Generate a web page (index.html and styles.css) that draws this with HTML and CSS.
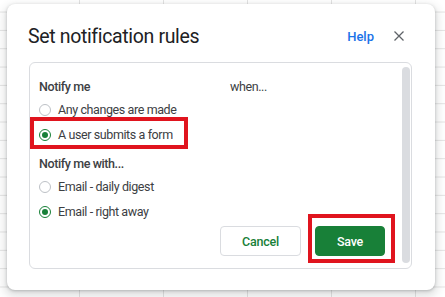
FILE: index.html
```html
<!DOCTYPE html>
<html>
<head>
<meta charset="utf-8">
<link rel="stylesheet" href="styles.css">
</head>
<body>
<div class="dialog">
  <div class="header">
    <div class="title">Set notification rules</div>
    <div class="help">Help</div>
    <svg class="close" width="10" height="10" viewBox="0 0 10 10"><path d="M0.5 0.5L9.5 9.5M9.5 0.5L0.5 9.5" stroke="#5f6368" stroke-width="1.3" fill="none"/></svg>
  </div>
  <div class="panel">
    <div class="heading-row">
      <span class="heading">Notify me</span>
      <span class="when">when...</span>
    </div>
    <label class="radio-row"><span class="radio"></span>Any changes are made</label>
    <label class="radio-row"><span class="radio checked"></span>A user submits a form</label>
    <div class="heading-row second"><span class="heading">Notify me with...</span></div>
    <label class="radio-row"><span class="radio"></span>Email - daily digest</label>
    <label class="radio-row"><span class="radio checked"></span>Email - right away</label>
    <div class="actions">
      <button class="btn cancel">Cancel</button>
      <button class="btn save">Save</button>
    </div>
    <div class="scrollbar"></div>
    <div class="mark mark-form"></div>
    <div class="mark mark-save"></div>
  </div>
</div>
</body>
</html>
```
FILE: styles.css
```css
html, body {
  margin: 0;
  padding: 0;
}
body {
  width: 445px;
  height: 297px;
  overflow: hidden;
  font-family: Roboto, "Liberation Sans", Arial, sans-serif;
  background-color: #fff;
  background-image:
    linear-gradient(to right, transparent 79px, #e3e3e3 79px, #e3e3e3 80px, transparent 80px),
    linear-gradient(to bottom, transparent 12px, #e3e3e3 12px, #e3e3e3 13px, transparent 13px);
  background-size: 84px 100%, 100% 18.33px;
  position: relative;
}
.dialog {
  position: absolute;
  left: 7px;
  top: 4px;
  width: 428px;
  height: 286px;
  box-sizing: border-box;
  background: #fff;
  border-radius: 8px;
  box-shadow: 0 1px 3px rgba(60,64,67,.3), 0 4px 8px 3px rgba(60,64,67,.15);
  padding: 20px 23px 21px 22px;
  display: flex;
  flex-direction: column;
}
.header {
  display: flex;
  align-items: center;
  height: 24px;
  margin-bottom: 14px;
}
.title {
  font-size: 19.5px;
  letter-spacing: -0.35px;
  color: #202124;
  margin-left: -1px;
  flex: 1;
}
.help {
  color: #1a73e8;
  font-size: 13px;
  font-weight: 500;
  margin-right: 20px;
}
.close {
  margin-right: 8px;
}
.panel {
  position: relative;
  flex: 1;
  border: 1px solid #dadce0;
  border-radius: 6px;
  padding: 12px 26px 0 9px;
  display: flex;
  flex-direction: column;
  color: #3c4043;
  font-size: 12.5px;
  letter-spacing: -0.4px;
}
.heading-row {
  display: flex;
  align-items: center;
  height: 22px;
}
.heading-row.second {
  margin-top: 5px;
}
.heading {
  font-weight: 500;
  color: #3c4043;
  width: 191px;
}
.when {
  color: #3c4043;
}
.radio-row {
  display: flex;
  align-items: center;
  height: 25px;
}
.radio {
  width: 12px;
  height: 12px;
  box-sizing: border-box;
  border: 1px solid #bdc1c6;
  border-radius: 50%;
  margin: 0 7px 0 0;
  display: flex;
  align-items: center;
  justify-content: center;
}
.radio.checked {
  border-color: #188038;
}
.radio.checked::after {
  content: "";
  width: 6px;
  height: 6px;
  border-radius: 50%;
  background: #188038;
}
.actions {
  display: flex;
  justify-content: flex-end;
  gap: 14px;
  margin-top: 2px;
}
.btn {
  font-family: inherit;
  font-size: 12.5px;
  font-weight: 500;
  letter-spacing: -0.2px;
  height: 30px;
  border-radius: 4px;
  box-sizing: border-box;
  padding: 0;
}
.cancel {
  width: 81px;
  background: #fff;
  border: 1px solid #dadce0;
  color: #188038;
}
.save {
  width: 70px;
  background: #188038;
  border: 1px solid #188038;
  color: #fff;
}
.scrollbar {
  position: absolute;
  right: 1px;
  top: 4px;
  width: 8px;
  height: 196px;
  border-radius: 4px;
  background: #dadce0;
}
.mark {
  position: absolute;
  border: 4px solid #e0141e;
  box-sizing: border-box;
}
.mark-form {
  left: 0;
  top: 54px;
  width: 158px;
  height: 32px;
}
.mark-save {
  left: 278px;
  top: 151px;
  width: 87px;
  height: 49px;
}
```
